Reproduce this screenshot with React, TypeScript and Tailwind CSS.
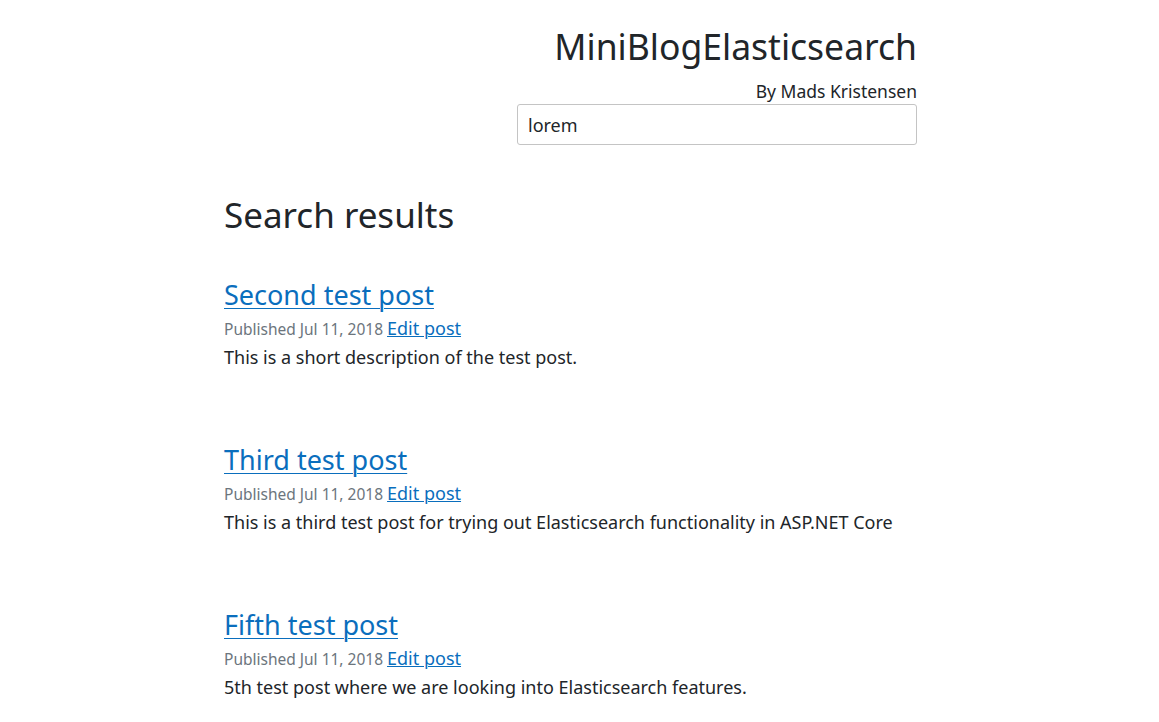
import React from "react";

const posts = [
  { title: "Second test post", desc: "This is a short description of the test post." },
  { title: "Third test post", desc: "This is a third test post for trying out Elasticsearch functionality in ASP.NET Core" },
  { title: "Fifth test post", desc: "5th test post where we are looking into Elasticsearch features." },
];

export default function App() {
  return (
    <div
      className="min-h-screen bg-white text-[#212529] pr-[17px]"
      style={{ fontFamily: '"Noto Sans", "Open Sans", sans-serif' }}
    >
      <div className="mx-auto w-[692px]">
        <header className="flex flex-col items-end pt-[22px]">
          <h1 className="text-[35.5px] leading-[48px] font-normal">MiniBlogElasticsearch</h1>
          <p className="text-[17.5px] leading-[22px] mt-[10px]">By Mads Kristensen</p>
          <input
            defaultValue="lorem"
            className="mt-[2px] w-[400px] h-[41px] rounded-[3px] border border-[#c4c4c4] px-[10px] text-[18px] outline-none"
          />
        </header>
        <main className="pt-[46px] -ml-[1px]">
          <h2 className="text-[35px] leading-[48px] font-normal">Search results</h2>
          <div className="mt-[38px]">
            {posts.map((p) => (
              <article key={p.title} className="h-[165px]">
                <a href="#" className="text-[27px] leading-[36px] text-[#0a6ebd] underline underline-offset-[3px] decoration-1">
                  {p.title}
                </a>
                <div className="leading-[24px] mt-[3px]">
                  <span className="text-[15.5px] text-[#6c757d]">Published Jul 11, 2018 </span>
                  <a href="#" className="text-[18px] text-[#0a6ebd] underline decoration-1">Edit post</a>
                </div>
                <p className="text-[18px] leading-[28px] mt-[2px]">{p.desc}</p>
              </article>
            ))}
          </div>
        </main>
      </div>
    </div>
  );
}
